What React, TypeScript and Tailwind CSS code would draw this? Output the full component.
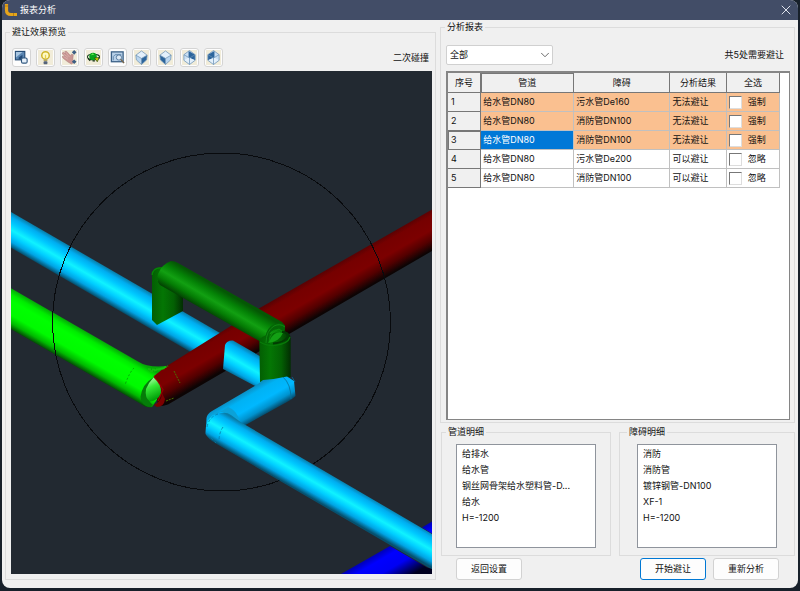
import React from 'react';
import { ChevronDown, X } from 'lucide-react';

const rows = [
  { pipe: '给水管DN80', obstacle: '污水管De160', result: '无法避让', action: '强制' },
  { pipe: '给水管DN80', obstacle: '消防管DN100', result: '无法避让', action: '强制' },
  { pipe: '给水管DN80', obstacle: '消防管DN100', result: '无法避让', action: '强制' },
  { pipe: '给水管DN80', obstacle: '污水管De200', result: '可以避让', action: '忽略' },
  { pipe: '给水管DN80', obstacle: '消防管DN100', result: '可以避让', action: '忽略' },
];

const pipeDetail = ['给排水', '给水管', '钢丝网骨架给水塑料管-D...', '给水', 'H=-1200'];
const obstacleDetail = ['消防', '消防管', '镀锌钢管-DN100', 'XF-1', 'H=-1200'];

const cubeFaces = ['right', 'left', 'backRight', 'backLeft'] as const;

function CubeIcon({ face }: { face: (typeof cubeFaces)[number] }) {
  const dark = '#2c659c';
  const light = '#c9dff3';
  return (
    <svg viewBox="0 0 16 16" className="h-[15px] w-[15px]">
      <rect width="16" height="16" fill="#f1ecd9" />
      {face === 'right' || face === 'left' ? (
        <>
          <path d="M8 1 14 5.5 8 9 2 5.5Z" fill="#e3f0fb" />
          <path d="M2 5.5 8 9V15.5L2.5 10.5Z" fill={face === 'left' ? dark : '#b9d5ef'} />
          <path d="M14 5.5 8 9V15.5L13.5 10.5Z" fill={face === 'right' ? dark : '#b9d5ef'} />
          <path d="M8 1 14 5.5 13.5 10.5 8 15.5 2.5 10.5 2 5.5ZM2 5.5 8 9 14 5.5M8 9V15.5" fill="none" stroke="#6e93b5" strokeWidth="0.8" />
        </>
      ) : (
        <>
          <path d="M8 0.5 14 5V11L8 15.5 2 11V5Z" fill={light} />
          <path d={face === 'backRight' ? 'M7 1 14 5V11L7 8Z' : 'M9 1 2 5V11L9 8Z'} fill={dark} />
          <path d={face === 'backRight' ? 'M7 8 14 11 8 15.5 2 11Z' : 'M9 8 14 11 8 15.5 2 11Z'} fill="#e3f0fb" />
          <path d="M8 0.5 14 5V11L8 15.5 2 11V5ZM2 5 8 8.5 14 5M8 8.5V15.5" fill="none" stroke="#6e93b5" strokeWidth="0.8" />
        </>
      )}
    </svg>
  );
}

const tools = [
  {
    name: '窗口缩放',
    icon: (
      <svg viewBox="0 0 16 16" className="h-[15px] w-[15px]">
        <rect x="1.5" y="1.5" width="10" height="9" fill="#5b87b3" stroke="#244b74" strokeWidth="1.2" />
        <path d="M2 2H9L2 8Z" fill="#a8c6e2" />
        <path d="M5 8 9 5V10H5Z" fill="#234b78" />
        <rect x="8" y="8.5" width="6" height="5.5" rx="1.5" fill="#e6f0fa" stroke="#31587f" strokeWidth="1.2" />
      </svg>
    ),
  },
  {
    name: '灯光',
    icon: (
      <svg viewBox="0 0 16 16" className="h-[15px] w-[15px]">
        <rect width="16" height="16" fill="#f1ecd9" />
        <circle cx="8" cy="5.8" r="4" fill="#fffbc6" stroke="#cfb52c" strokeWidth="1.6" />
        <path d="M8 5V10" stroke="#e6cf4e" strokeWidth="1.4" />
        <rect x="6" y="10" width="4" height="2" fill="#b3a461" />
        <rect x="6" y="12" width="4" height="3.3" rx="1" fill="#54637b" />
      </svg>
    ),
  },
  {
    name: '平移',
    icon: (
      <svg viewBox="0 0 16 16" className="h-[15px] w-[15px]">
        <rect width="16" height="16" fill="#f1ecd9" />
        <path d="M0 3.5 1.5 2.5 4 4 3 1.5 5 1.5 9 6 10 4.5 12 5 11.5 10 13 13 10 15 6 12.5 1.5 9 0 7 3 7Z" fill="#c99693" stroke="#b07e7d" strokeWidth="0.6" />
        <path d="m1.5 4 5 4M4 2.5l4 5M1.5 7l5 3" stroke="#ddb5b1" strokeWidth="0.7" />
        <path d="m13 0 2.5 2.5L13 5 10.5 2.5ZM13 10l2.5 2.5L13 15l-2.5-2.5Z" fill="#3d5e83" />
      </svg>
    ),
  },
  {
    name: '动态观察',
    icon: (
      <svg viewBox="0 0 16 16" className="h-[15px] w-[15px]">
        <rect width="16" height="16" fill="#f1ecd9" />
        <ellipse cx="8" cy="7.5" rx="6.5" ry="3" fill="none" stroke="#183c22" strokeWidth="1.1" />
        <circle cx="7.5" cy="7" r="4" fill="#08a51b" />
        <path d="M5 5.5 7 3.5 9 5Z" fill="#63e353" />
        <path d="m9 8.5 5-.5-2 4.5Z" fill="#d5d400" stroke="#2b4a0e" strokeWidth="0.8" />
        <path d="M2 9 4.5 11.5M7 11.5h2.5" stroke="#143015" strokeWidth="1.3" />
      </svg>
    ),
  },
  {
    name: '范围缩放',
    icon: (
      <svg viewBox="0 0 16 16" className="h-[15px] w-[15px]">
        <rect x="1.5" y="2" width="12.5" height="10.5" fill="#b8d0e8" stroke="#3d6288" strokeWidth="1.4" />
        <path d="M3.5 11V7L5.5 5H12" fill="none" stroke="#6287ac" />
        <circle cx="9.5" cy="8" r="2.8" fill="#dce9f5" stroke="#54789d" />
        <path d="m11.5 10 3.5 4" stroke="#766448" strokeWidth="1.6" />
      </svg>
    ),
  },
  { name: '东南视图', icon: <CubeIcon face="right" /> },
  { name: '西南视图', icon: <CubeIcon face="left" /> },
  { name: '东北视图', icon: <CubeIcon face="backRight" /> },
  { name: '西北视图', icon: <CubeIcon face="backLeft" /> },
];

function CyanStops() {
  return (
    <>
      <stop offset="0" stopColor="#087da8" />
      <stop offset="0.14" stopColor="#00adf0" />
      <stop offset="0.3" stopColor="#00c9ff" />
      <stop offset="0.5" stopColor="#10f2ff" />
      <stop offset="0.68" stopColor="#00cdff" />
      <stop offset="0.84" stopColor="#00a4e4" />
      <stop offset="1" stopColor="#06506e" />
    </>
  );
}

function PipeScene() {
  return (
    <svg
      viewBox="11 71 421 503"
      preserveAspectRatio="xMidYMid slice"
      role="img"
      aria-label="避让效果预览"
      className="block min-h-0 w-full flex-1 bg-[#222931]">
      <defs>
        <linearGradient id="cyanA" gradientUnits="userSpaceOnUse" x1="11" y1="212" x2="-4.4" y2="238.6"><CyanStops /></linearGradient>
        <linearGradient id="cyanB" gradientUnits="userSpaceOnUse" x1="232" y1="340" x2="216.6" y2="366.6"><CyanStops /></linearGradient>
        <linearGradient id="cyanC" gradientUnits="userSpaceOnUse" x1="241.7" y1="423" x2="226.7" y2="449"><CyanStops /></linearGradient>
        <linearGradient id="cyanD" gradientUnits="userSpaceOnUse" x1="246" y1="391" x2="261" y2="417">
          <stop offset="0" stopColor="#0a8fc4" />
          <stop offset="0.2" stopColor="#00b2f4" />
          <stop offset="0.55" stopColor="#00b8ff" />
          <stop offset="0.8" stopColor="#0092ce" />
          <stop offset="1" stopColor="#064765" />
        </linearGradient>
        <linearGradient id="lime" gradientUnits="userSpaceOnUse" x1="11" y1="288.3" x2="-6.7" y2="319">
          <stop offset="0" stopColor="#05a907" />
          <stop offset="0.15" stopColor="#00ec00" />
          <stop offset="0.3" stopColor="#00ff00" />
          <stop offset="0.65" stopColor="#00fa00" />
          <stop offset="0.85" stopColor="#00b900" />
          <stop offset="1" stopColor="#044a06" />
        </linearGradient>
        <linearGradient id="red" gradientUnits="userSpaceOnUse" x1="432" y1="209" x2="449.7" y2="239.7">
          <stop offset="0" stopColor="#590203" />
          <stop offset="0.15" stopColor="#760000" />
          <stop offset="0.5" stopColor="#7c0000" />
          <stop offset="0.75" stopColor="#530000" />
          <stop offset="1" stopColor="#0c0404" />
        </linearGradient>
        <linearGradient id="greenBar" gradientUnits="userSpaceOnUse" x1="172" y1="261" x2="158.5" y2="284">
          <stop offset="0" stopColor="#045804" />
          <stop offset="0.25" stopColor="#048206" />
          <stop offset="0.5" stopColor="#12a012" />
          <stop offset="0.75" stopColor="#047c04" />
          <stop offset="1" stopColor="#034003" />
        </linearGradient>
        <linearGradient id="greenPost" x1="0" y1="0" x2="1" y2="0">
          <stop offset="0" stopColor="#035e03" />
          <stop offset="0.35" stopColor="#047604" />
          <stop offset="0.7" stopColor="#036003" />
          <stop offset="1" stopColor="#022d02" />
        </linearGradient>
        <linearGradient id="blue" gradientUnits="userSpaceOnUse" x1="390" y1="546" x2="408" y2="577">
          <stop offset="0" stopColor="#0000b8" />
          <stop offset="0.2" stopColor="#0000ff" />
          <stop offset="0.55" stopColor="#0000f4" />
          <stop offset="1" stopColor="#00001f" />
        </linearGradient>
        <linearGradient id="cap" x1="0" y1="0" x2="0.3" y2="1">
          <stop offset="0" stopColor="#d2ffd0" />
          <stop offset="0.45" stopColor="#38ea38" />
          <stop offset="1" stopColor="#009d08" />
        </linearGradient>
      </defs>

      <path d="M11 212 220 333V369L11 247.7Z" fill="url(#cyanA)" />
      <path d="M11 288.3 138 361.5Q148 368 167 366L162 392 152 407Q145 408 140 403.5L11 329.3Z" fill="url(#lime)" />
      <path d="M432 209.5 258 309 166 366.5 154 376 158 406Q162 406.5 168 404.5L290 333.5 432 251Z" fill="url(#red)" />
      <path d="M154 376 163 389.5 158 401" fill="none" stroke="#970202" strokeWidth="1.2" />

      {/* elbow where the lime pipe meets the red one */}
      <path d="M154 377Q142 384 140.5 397 141 405 149 407L153 405Q143 398 154 377Z" fill="#057c09" />
      <path d="M153.5 377.5Q162 385 161 393 158 401 150 401.5 144.5 398 146 389 149 382 153.5 377.5Z" fill="url(#cap)" />
      <path d="M154 405Q162 401 162 393L165 399Q164 407 157 407Z" fill="#7d0000" />
      <path d="M148 369Q158 371 168 366M150 371.5 165 368" fill="none" stroke="#16bd0f" strokeWidth="1.8" strokeDasharray="3 1" />
      <path d="M134 368Q129 373 125 385" fill="none" stroke="#098c0a" strokeWidth="0.8" strokeDasharray="2 2" />
      <path d="M174 371 180 383M166 401 174 398" fill="none" stroke="#4b7100" strokeWidth="1" strokeDasharray="2 1" />

      <path d="M225 345Q227 340 233 340.5L270 362V394L223 369Z" fill="url(#cyanB)" />

      <circle cx="221.5" cy="322" r="169" fill="none" stroke="#080a0d" strokeWidth="1" shapeRendering="crispEdges" />

      {/* raised detour */}
      <path d="M152 273Q154 267 162 267L183 280V311L157 325 152 320Z" fill="url(#greenPost)" />
      <path d="M152 275Q153 267 162 268L158 281" fill="none" stroke="#078507" strokeWidth="1.2" />
      <path d="M171 261Q175 261 178 263L282 322Q287 326 284 332L277 346H268L160 285Q156 281 158 274 162 264 171 261Z" fill="url(#greenBar)" />
      <path d="M259.3 340Q264 333 285 331.5 291 333 290.7 339V377L260 382Z" fill="url(#greenPost)" />
      <path d="M265.5 343Q264 332 271 326 279 321 285 325.5L284 331Q276 326 270 333 267 339 270 344Z" fill="#046506" />
      <path d="M266 343Q266 331 274 326 280 323 285 327M269 342Q270 332 279 329L283 332" fill="none" stroke="#118b12" strokeWidth="0.9" />
      <path d="M270 340Q275 330 283 333 279 342 268 343Z" fill="#13a014" />
      <path d="M282 332Q288 332 288 337 283 343 273 343.5" fill="none" stroke="#023b03" strokeWidth="1.8" />
      <path d="M260 342Q266 346 275 345.5 288 344 290 337" fill="none" stroke="#087b09" strokeWidth="1.2" />

      {/* lower detour leg */}
      <path d="M206.5 418Q207 414 212 411L258 384 263 380Q276 379 287 376.5L294 381 295.5 396Q293 399 287 402L240 428 216 441 206 431Z" fill="url(#cyanD)" />
      <path d="M283 377Q291 384 291 399M292 377 295 382" fill="none" stroke="#08719b" strokeWidth="0.8" />
      <path d="M207 420Q211 410 223 412L240 422Q237 410 228 407" fill="#0ba2d8" />
      <path d="M221 413Q227 412 231 415L241.7 422.7 432 534V569.5L216 443.5Q208 439 205.5 434 205 421 213 415Z" fill="url(#cyanC)" />
      <path d="M223 427Q219 433 219 441M207 427Q209 417 218 414M211 438 216 443" fill="none" stroke="#0879a5" strokeWidth="0.8" strokeDasharray="3 2" />
      <path d="M341 574 390 546 427 567.5 432 569V574ZM422 527.5 432 521.5V533.5Z" fill="url(#blue)" />
    </svg>
  );
}

interface DetailListProps {
  title: string;
  items: string[];
  className: string;
}

function DetailList({ title, items, className }: DetailListProps) {
  return (
    <fieldset className={`min-w-0 border border-[#dcdcdc] pt-1.5 pb-[7px] ${className}`}>
      <legend className="-ml-2.5 px-0.5 leading-3">{title}</legend>
      <ul className="h-[104px] border border-[#8f949c] bg-white px-[5px] pt-px">
        {items.map((item) => (
          <li key={item} className="truncate leading-4">{item}</li>
        ))}
      </ul>
    </fieldset>
  );
}

export default function App() {
  return (
    <div className="flex h-screen flex-col bg-[#17202a] px-0.5 pb-[3px] font-[Inter,'Noto_Sans_CJK_SC',sans-serif] text-[9px] leading-3 text-[#111]">
      <div className="flex min-h-0 flex-1 flex-col overflow-hidden rounded-lg bg-[#f0f0f0]">
        {/* Title bar */}
        <header className="flex h-5 shrink-0 items-center bg-[#424d67] pr-1 pl-0.5 text-white">
          <svg viewBox="0 0 14 14" className="mr-0.5 h-3.5 w-3.5">
            <path d="M2.5 1V7Q2.5 11.5 7 11.5H13" fill="none" stroke="#e5a51b" strokeWidth="3.2" />
            <path d="M1 3H4M9.5 10V13" stroke="#af7612" strokeWidth="0.8" />
          </svg>
          <h1 className="flex-1">报表分析</h1>
          <button type="button" aria-label="关闭" className="text-[#dfe3ec]">
            <X size={16} strokeWidth={1.5} />
          </button>
        </header>

        <main className="grid min-h-0 flex-1 grid-cols-[431fr_355fr] gap-1 px-[3px]">
          {/* Preview */}
          <fieldset className="mt-1.5 mb-2 flex min-w-0 flex-col border border-[#dcdcdc] pt-2.5 pr-[3px] pb-[5px] pl-[5px]">
            <legend className="-ml-px px-0.5">避让效果预览</legend>
            <div className="mb-1 flex items-center gap-[5px] pl-px">
              {tools.map((tool) => (
                <button
                  key={tool.name}
                  type="button"
                  aria-label={tool.name}
                  className="flex h-[19px] w-[19px] items-center justify-center rounded-[3px] border border-[#d4d4d4] bg-[#fdfdfd]">
                  {tool.icon}
                </button>
              ))}
              <span className="ml-auto pr-[3px]">二次碰撞</span>
            </div>
            <PipeScene />
          </fieldset>

          {/* Report */}
          <div className="flex min-h-0 min-w-0 flex-col">
            <fieldset className="mt-px flex min-h-0 min-w-0 flex-1 flex-col border border-[#dcdcdc] pt-3 pr-1 pb-0.5 pl-[5px]">
              <legend className="-ml-px px-0.5">分析报表</legend>
              <div className="mb-1.5 flex items-center justify-between">
                <div className="relative">
                  <select aria-label="筛选" className="h-5 w-[107px] appearance-none rounded-xs border border-[#d0d0d0] bg-white pl-[3px]">
                    <option>全部</option>
                  </select>
                  <ChevronDown size={14} strokeWidth={1.5} className="pointer-events-none absolute top-[3px] right-px text-[#555]" />
                </div>
                <span className="pr-1.5">共5处需要避让</span>
              </div>
              <div className="min-h-0 flex-1 border-t-2 border-r border-b border-l-2 border-[#858585] bg-white">
                <table className="w-[calc(100%-9px)] table-fixed border-separate border-spacing-0">
                  <colgroup>
                    <col className="w-[10%]" />
                    <col className="w-[28%]" />
                    <col className="w-[29%]" />
                    <col className="w-[17%]" />
                    <col className="w-[16%]" />
                  </colgroup>
                  <thead>
                    <tr className="h-5 bg-[#f0f0f0]">
                      {['序号', '管道', '障碍', '分析结果', '全选'].map((head) => (
                        <th
                          key={head}
                          className={`border-r border-b border-[#777] p-0 font-normal ${head === '管道' ? 'shadow-[inset_1px_1px_0_#777]' : ''}`}>
                          {head}
                        </th>
                      ))}
                    </tr>
                  </thead>
                  <tbody>
                    {rows.map((row, i) => {
                      const cell = 'border-r border-b border-[#c0c0c0] p-0 pl-0.5';
                      return (
                        <tr key={i} className={i < 3 ? 'h-[19px] bg-[#fac090]' : 'h-[19px] bg-white'}>
                          <th className={`border-r border-b border-[#777] bg-[#f0f0f0] p-0 pl-[3px] text-left font-normal ${i === 2 ? 'shadow-[inset_1px_1px_0_#777]' : ''}`}>{i + 1}</th>
                          <td className={i === 2 ? `${cell} bg-[#0078d7] text-white` : cell}>{row.pipe}</td>
                          <td className={cell}>{row.obstacle}</td>
                          <td className={cell}>{row.result}</td>
                          <td className={cell}>
                            <label className="flex items-center gap-1.5">
                              <input
                                type="checkbox"
                                className="h-[13px] w-[13px] appearance-none border border-t-[#777] border-r-[#ddd] border-b-[#ddd] border-l-[#777] bg-white" />
                              {row.action}
                            </label>
                          </td>
                        </tr>
                      );
                    })}
                  </tbody>
                </table>
              </div>
            </fieldset>

            <div className="mt-[3px] grid grid-cols-[170fr_176fr] gap-2 pl-px">
              <DetailList title="管道明细" items={pipeDetail} className="px-3.5" />
              <DetailList title="障碍明细" items={obstacleDetail} className="px-[17px]" />
            </div>

            <div className="mt-0.5 mb-2 flex gap-[7px] pr-4 pl-4">
              <button type="button" className="mr-auto h-[22px] w-[66px] rounded-[3px] border border-[#d2d2d2] bg-[#fdfdfd]">返回设置</button>
              <button type="button" className="h-[22px] w-[66px] rounded-[3px] border border-[#0078d4] bg-[#fdfdfd]">开始避让</button>
              <button type="button" className="h-[22px] w-[66px] rounded-[3px] border border-[#d2d2d2] bg-[#fdfdfd]">重新分析</button>
            </div>
          </div>
        </main>
      </div>
    </div>
  );
}
